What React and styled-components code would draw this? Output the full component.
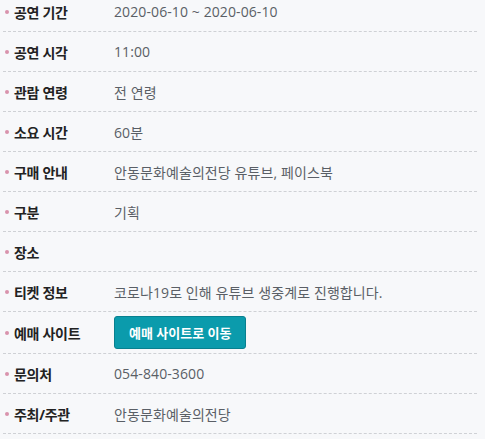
import React from "react";
import styled, { createGlobalStyle } from "styled-components";

const GlobalStyle = createGlobalStyle`
  html, body {
    margin: 0;
    padding: 0;
    background: #f7f8fa;
  }
  body {
    font-family: "Open Sans", "Noto Sans CJK KR", sans-serif;
  }
`;

export const InfoList = styled.ul`
  list-style: none;
  margin: -8px 0 0 3px;
  padding: 0;
  width: 474px;
`;

export const InfoRow = styled.li`
  display: flex;
  align-items: center;
  min-height: 39px;
  border-bottom: 1px dashed #cfd1d5;
  box-sizing: content-box;
  padding: ${({ $tall }) => ($tall ? "1px 0" : "0")};
`;

export const InfoLabel = styled.span`
  position: relative;
  flex: 0 0 100px;
  padding-left: 11px;
  font-size: 14px;
  font-weight: 700;
  color: #222;
  letter-spacing: -0.3px;

  &::before {
    content: "";
    position: absolute;
    left: 2px;
    top: 50%;
    width: 4px;
    height: 4px;
    margin-top: -2px;
    border-radius: 50%;
    background: #d993ac;
  }
`;

export const InfoValue = styled.span`
  font-size: 14px;
  color: #5a5f66;
  letter-spacing: 0.1px;
`;

export const TicketButton = styled.a`
  display: inline-flex;
  align-items: center;
  justify-content: center;
  height: 31px;
  padding: 0 14px;
  border: 1px solid #08808f;
  border-radius: 3px;
  background: #0b9bac;
  color: #fff;
  font-size: 13px;
  font-weight: 700;
  text-decoration: none;
  box-sizing: content-box;
`;

const rows = [
  { label: "공연 기간", value: "2020-06-10 ~ 2020-06-10" },
  { label: "공연 시각", value: "11:00" },
  { label: "관람 연령", value: "전 연령" },
  { label: "소요 시간", value: "60분" },
  { label: "구매 안내", value: "안동문화예술의전당 유튜브, 페이스북" },
  { label: "구분", value: "기획" },
  { label: "장소", value: "" },
  { label: "티켓 정보", value: "코로나19로 인해 유튜브 생중계로 진행합니다." },
  { label: "예매 사이트", button: "예매 사이트로 이동" },
  { label: "문의처", value: "054-840-3600" },
  { label: "주최/주관", value: "안동문화예술의전당" },
];

const App = () => {
  return (
    <>
      <GlobalStyle />
      <InfoList>
        {rows.map(row => (
          <InfoRow key={row.label} $tall={!!row.button}>
            <InfoLabel>{row.label}</InfoLabel>
            {row.button ? (
              <TicketButton href="#">{row.button}</TicketButton>
            ) : (
              <InfoValue>{row.value}</InfoValue>
            )}
          </InfoRow>
        ))}
      </InfoList>
    </>
  );
};

export default App;
